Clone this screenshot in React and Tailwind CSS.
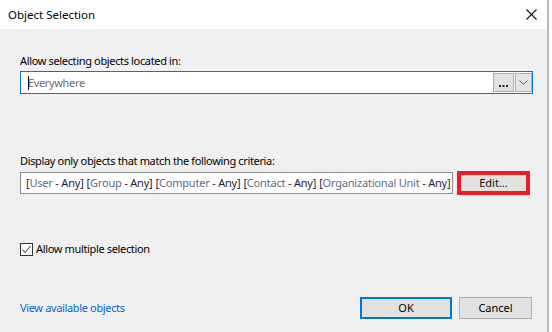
import React from "react";

const F = { fontFamily: '"Noto Sans", "Open Sans", sans-serif', letterSpacing: "-0.35px" };

function Crit({ name }) {
  return (
    <span>
      <span className="text-[#1b1b3a]">[</span>
      <span className="text-[#5b6b86]">{name}</span>
      <span className="text-[#1b1b3a]"> - Any]</span>
    </span>
  );
}

export default function App() {
  return (
    <div className="w-[552px] h-[332px] flex bg-white text-[11px] text-black overflow-hidden" style={F}>
      <div className="w-[549px] h-full flex flex-col border-r-2 border-[#b9b9b9]">
        <div className="h-[29px] bg-white flex items-center justify-between pl-[8px] pr-[9px] shrink-0">
          <span className="leading-[16px] text-[11.5px] tracking-[0px]">Object Selection</span>
          <svg width="11" height="11" viewBox="0 0 11 11" className="mr-[1px]">
            <path d="M0.5 0.5 L10.5 10.5 M10.5 0.5 L0.5 10.5" stroke="#111" strokeWidth="1.1" />
          </svg>
        </div>
        <div className="flex-1 bg-[#f0f0f0] flex flex-col pl-[20px] pr-[14px] pt-[24px]">
          <div className="leading-[16px]">Allow selecting objects located in:</div>
          <div className="mt-[2px] h-[23px] border border-[#0078d7] bg-white flex items-start pt-[1px]">
            <div className="flex-1 h-[19px] flex items-center pl-[7px]">
              <span className="w-px h-[14px] bg-black -mr-px"></span>
              <span className="text-[#6d6d6d] leading-[16px]">Everywhere</span>
            </div>
            <div className="w-[21px] h-[19px] border border-[#adadad] bg-[#e1e1e1] flex items-end justify-center pb-[4px]">
              <svg width="9" height="2" viewBox="0 0 9 2">
                <rect x="0" y="0" width="2" height="2" fill="#222" />
                <rect x="3.5" y="0" width="2" height="2" fill="#222" />
                <rect x="7" y="0" width="2" height="2" fill="#222" />
              </svg>
            </div>
            <div className="w-[17px] h-[19px] ml-px border border-[#adadad] bg-[#e5e5e5] flex items-center justify-center">
              <svg width="9" height="5" viewBox="0 0 9 5">
                <path d="M0.5 0.5 L4.5 4.5 L8.5 0.5" stroke="#555" strokeWidth="1" fill="none" />
              </svg>
            </div>
          </div>
          <div className="mt-[59px] leading-[16px]">Display only objects that match the following criteria:</div>
          <div className="mt-[2px] flex items-start">
            <div className="mt-px w-[433px] h-[22px] border border-[#8c8c8c] bg-white flex items-center pl-[5px] whitespace-nowrap overflow-hidden leading-[16px] gap-[3px] tracking-[-0.2px]">
              <Crit name="User" />
              <Crit name="Group" />
              <Crit name="Computer" />
              <Crit name="Contact" />
              <Crit name="Organizational Unit" />
            </div>
            <div className="ml-[4px] w-[73px] h-[24px] border-[4px] border-[#ed1c24] bg-[#e1e1e1] flex items-center justify-center">
              <span className="leading-[16px] text-[#111] tracking-[0px]">Edit...</span>
            </div>
          </div>
          <div className="mt-[46px] h-[16px] flex items-center">
            <div className="w-[13px] h-[13px] border border-[#333] bg-white flex items-center justify-center">
              <svg width="11" height="11" viewBox="0 0 11 11">
                <path d="M1.5 5.5 L4 8.5 L9.5 2" stroke="#333" strokeWidth="1" fill="none" />
              </svg>
            </div>
            <span className="ml-[3px] leading-[16px]">Allow multiple selection</span>
          </div>
          <div className="mt-[40px] h-[22px] flex items-center">
            <span className="text-[#0066cc] leading-[16px]">View available objects</span>
            <div className="flex-1"></div>
            <div className="w-[92px] h-[22px] border-2 border-[#0078d7] bg-[#e1e1e1] flex items-center justify-center">
              <span className="leading-[16px] tracking-[0px]">OK</span>
            </div>
            <div className="ml-[7px] w-[73px] h-[22px] border border-[#adadad] bg-[#e1e1e1] flex items-center justify-center mr-px">
              <span className="leading-[16px] tracking-[0px]">Cancel</span>
            </div>
          </div>
        </div>
      </div>
    </div>
  );
}
